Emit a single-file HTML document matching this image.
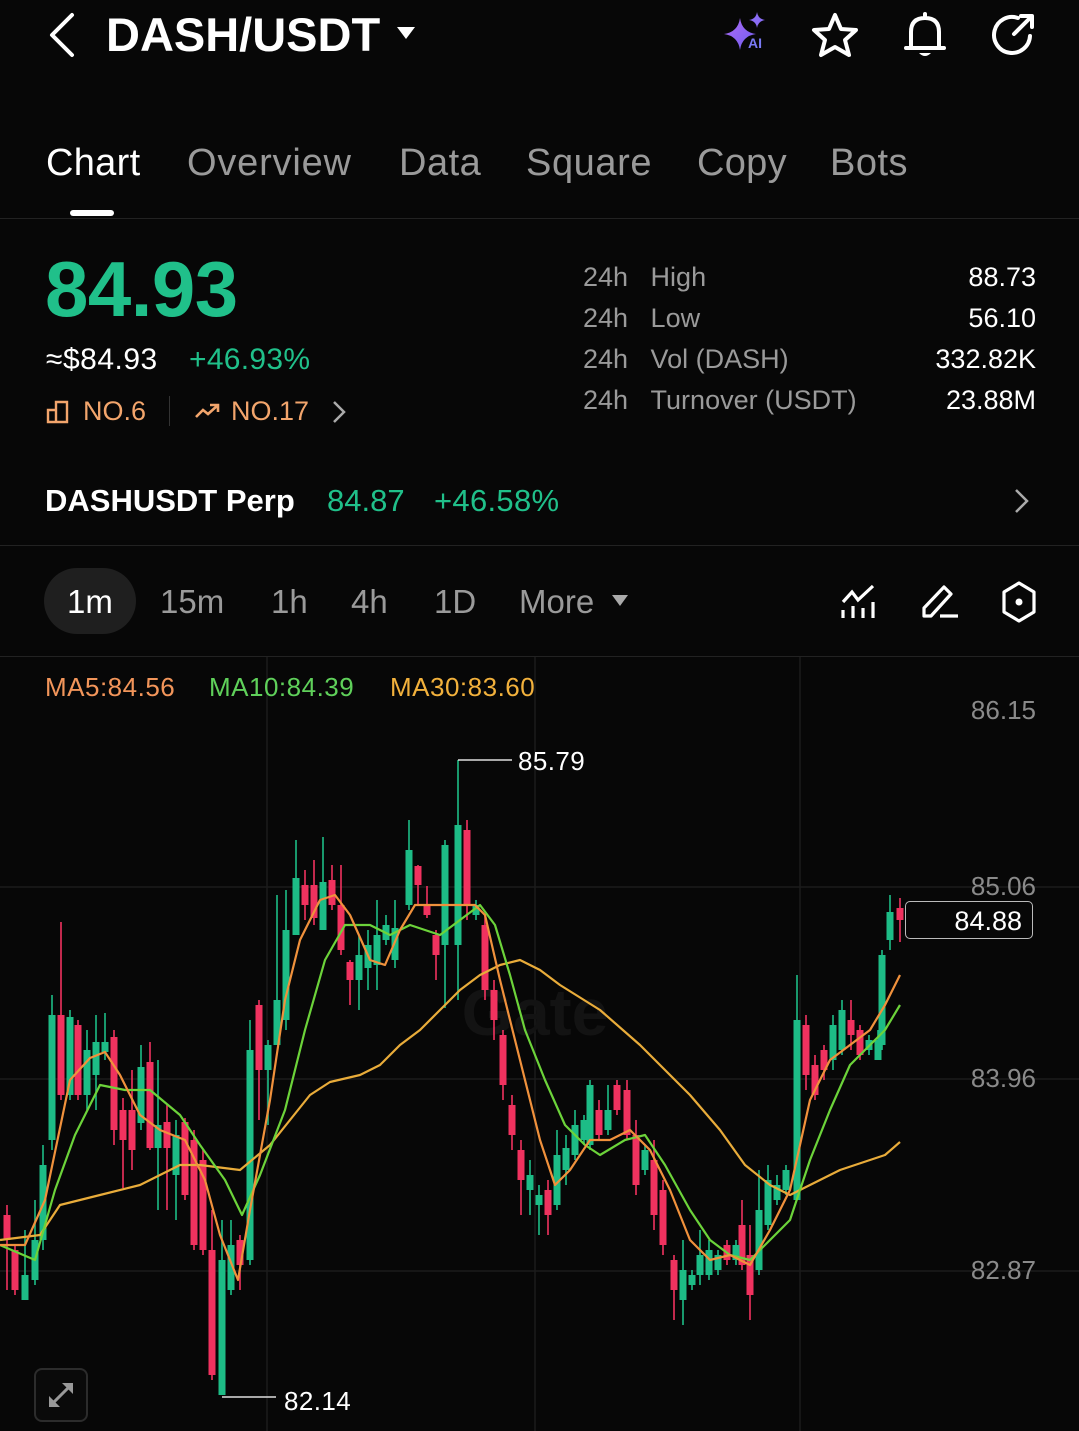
<!DOCTYPE html>
<html><head><meta charset="utf-8"><style>
*{margin:0;padding:0;box-sizing:border-box}
body{width:1079px;height:1431px;background:#070707;color:#fff;font-family:"Liberation Sans",sans-serif;position:relative;overflow:hidden}
.a{position:absolute;white-space:nowrap;line-height:1}
.g{color:#9a9a9a}
.gr{color:#20c08a}
.or{color:#f2a56c}
</style></head><body>
<svg class="a" style="left:44px;top:12px" width="34" height="46" viewBox="0 0 34 46"><path d="M28 3 L8 23 L28 43" fill="none" stroke="#fff" stroke-width="4" stroke-linecap="round" stroke-linejoin="round"/></svg>
<div class="a" style="left:106px;top:11px;font-size:47px;font-weight:700">DASH/USDT</div>
<svg class="a" style="left:396px;top:26px" width="20" height="14"><path d="M1 1 L19 1 L10 13Z" fill="#fff"/></svg>
<svg class="a" style="left:722px;top:10px" width="48" height="44" viewBox="0 0 48 44"><defs><linearGradient id="ag" x1="0" y1="0" x2="1" y2="1"><stop offset="0" stop-color="#b06cf5"/><stop offset="1" stop-color="#6d5cf0"/></linearGradient></defs><path d="M18 8 Q20 22 34 24 Q20 26 18 40 Q16 26 2 24 Q16 22 18 8Z" fill="url(#ag)"/><path d="M35 2 Q36 9 43 10 Q36 11 35 18 Q34 11 27 10 Q34 9 35 2Z" fill="#8a6cf5"/><text x="26" y="38" font-size="14" font-weight="700" fill="#7a7af5" style="font-family:'Liberation Sans',sans-serif">AI</text></svg>
<svg class="a" style="left:810px;top:12px" width="50" height="48" viewBox="0 0 50 48"><path d="M25 3 L31 17 L46 18 L35 28 L39 43 L25 35 L11 43 L15 28 L4 18 L19 17Z" fill="none" stroke="#fff" stroke-width="4" stroke-linejoin="round"/></svg>
<svg class="a" style="left:902px;top:10px" width="46" height="50" viewBox="0 0 46 50"><path d="M23 4 L23 7 M9 38 L9 22 Q9 8 23 8 Q37 8 37 22 L37 38 M4 38 L42 38" fill="none" stroke="#fff" stroke-width="4" stroke-linecap="round"/><path d="M17 43 Q23 49 29 43Z" fill="#fff"/></svg>
<svg class="a" style="left:990px;top:12px" width="46" height="46" viewBox="0 0 46 46"><path d="M28 6 A18 18 0 1 0 40 24" fill="none" stroke="#fff" stroke-width="4" stroke-linecap="round"/><path d="M24 22 L41 5 M31 4 L42 4 L42 15" fill="none" stroke="#fff" stroke-width="4" stroke-linecap="round" stroke-linejoin="round"/></svg>

<div class="a" style="left:46px;top:144px;font-size:38px;letter-spacing:0.3px">Chart</div>
<div class="a g" style="left:187px;top:144px;font-size:38px;letter-spacing:0.8px">Overview</div>
<div class="a g" style="left:399px;top:144px;font-size:38px;letter-spacing:0.5px">Data</div>
<div class="a g" style="left:526px;top:144px;font-size:38px;letter-spacing:0.6px">Square</div>
<div class="a g" style="left:697px;top:144px;font-size:38px;letter-spacing:0.3px">Copy</div>
<div class="a g" style="left:830px;top:144px;font-size:38px;letter-spacing:0.5px">Bots</div>
<div class="a" style="left:70px;top:210px;width:44px;height:6px;border-radius:3px;background:#fff"></div>
<div class="a" style="left:0;top:218px;width:1079px;height:1px;background:#222"></div>

<div class="a gr" style="left:45px;top:250px;font-size:78px;font-weight:700;letter-spacing:-0.5px">84.93</div>
<div class="a" style="left:46px;top:345px;font-size:30px;letter-spacing:0.5px">≈$84.93</div>
<div class="a gr" style="left:189px;top:345px;font-size:30px;letter-spacing:0.3px">+46.93%</div>
<svg class="a" style="left:46px;top:400px" width="24" height="24" viewBox="0 0 24 24"><path d="M2 22 L2 10 L10 10 L10 22 Z M10 22 L10 2 L21 2 L21 22 L2 22" fill="none" stroke="#f2a56c" stroke-width="2.4"/></svg>
<div class="a or" style="left:83px;top:398px;font-size:27px">NO.6</div>
<div class="a" style="left:169px;top:396px;width:1px;height:30px;background:#333"></div>
<svg class="a" style="left:194px;top:402px" width="26" height="18" viewBox="0 0 26 18"><path d="M2 15 L9 8 L14 12 L23 4 M16 3 L24 3 L24 10" fill="none" stroke="#f2a56c" stroke-width="2.6"/></svg>
<div class="a or" style="left:231px;top:398px;font-size:27px">NO.17</div>
<svg class="a" style="left:331px;top:400px" width="16" height="24"><path d="M3 2 L13 12 L3 22" fill="none" stroke="#aaa" stroke-width="2.5"/></svg>

<div class="a g" style="left:583px;top:264px;font-size:27px">24h&nbsp;&nbsp;&nbsp;High</div>
<div class="a g" style="left:583px;top:305px;font-size:27px">24h&nbsp;&nbsp;&nbsp;Low</div>
<div class="a g" style="left:583px;top:346px;font-size:27px">24h&nbsp;&nbsp;&nbsp;Vol (DASH)</div>
<div class="a g" style="left:583px;top:387px;font-size:27px">24h&nbsp;&nbsp;&nbsp;Turnover (USDT)</div>
<div class="a" style="right:43px;top:264px;font-size:27px">88.73</div>
<div class="a" style="right:43px;top:305px;font-size:27px">56.10</div>
<div class="a" style="right:43px;top:346px;font-size:27px">332.82K</div>
<div class="a" style="right:43px;top:387px;font-size:27px">23.88M</div>

<div class="a" style="left:45px;top:485px;font-size:31px;font-weight:700">DASHUSDT Perp</div>
<div class="a gr" style="left:327px;top:485px;font-size:31px">84.87</div>
<div class="a gr" style="left:434px;top:485px;font-size:31px;letter-spacing:0.3px">+46.58%</div>
<svg class="a" style="left:1013px;top:488px" width="18" height="26"><path d="M3 2 L14 13 L3 24" fill="none" stroke="#aaa" stroke-width="2.5"/></svg>
<div class="a" style="left:0;top:545px;width:1079px;height:1px;background:#222"></div>

<div class="a" style="left:44px;top:568px;width:92px;height:66px;border-radius:33px;background:#1f1f1f"></div>
<div class="a" style="left:67px;top:585px;font-size:33px">1m</div>
<div class="a g" style="left:160px;top:585px;font-size:33px">15m</div>
<div class="a g" style="left:271px;top:585px;font-size:33px">1h</div>
<div class="a g" style="left:351px;top:585px;font-size:33px">4h</div>
<div class="a g" style="left:434px;top:585px;font-size:33px">1D</div>
<div class="a g" style="left:519px;top:585px;font-size:33px">More</div>
<svg class="a" style="left:611px;top:594px" width="18" height="13"><path d="M1 1 L17 1 L9 12Z" fill="#aaa"/></svg>
<svg class="a" style="left:840px;top:584px" width="38" height="36" viewBox="0 0 38 36"><path d="M3 18 L12 8 L18 16 L33 2 M3 26 L3 34 M13 22 L13 34 M23 24 L23 34 M33 18 L33 34" fill="none" stroke="#fff" stroke-width="3.2"/></svg>
<svg class="a" style="left:920px;top:582px" width="40" height="38" viewBox="0 0 40 38"><path d="M4 34 L4 26 L24 5 L31 12 L11 34 Z M20 34 L38 34" fill="none" stroke="#fff" stroke-width="3.2" stroke-linejoin="round"/></svg>
<svg class="a" style="left:1000px;top:580px" width="38" height="44" viewBox="0 0 38 44"><path d="M19 3 L34 12 L34 32 L19 41 L4 32 L4 12 Z" fill="none" stroke="#fff" stroke-width="3.2" stroke-linejoin="round"/><circle cx="19" cy="22" r="3.5" fill="#fff"/></svg>
<div class="a" style="left:0;top:656px;width:1079px;height:1px;background:#222"></div>

<svg class="a" style="left:0;top:0" width="1079" height="1431">
<g stroke="#1c1c1c" stroke-width="1.5">
<line x1="0" y1="887" x2="1079" y2="887"/><line x1="0" y1="1079" x2="1079" y2="1079"/><line x1="0" y1="1271" x2="1079" y2="1271"/>
<line x1="267" y1="657" x2="267" y2="1431"/><line x1="535" y1="657" x2="535" y2="1431"/><line x1="800" y1="657" x2="800" y2="1431"/>
</g>
<text x="535" y="1035" font-size="66" font-weight="700" fill="#131313" style="font-family:'Liberation Sans',sans-serif" text-anchor="middle">Gate</text>
</svg>
<svg class="a" style="left:0;top:0" width="1079" height="1431">
<g>
<g stroke-width="1.6">
<path stroke="#f0325f" d="M7 1205V1290M15 1245V1295M61 922V1100M78 1020V1100M114 1030V1145M123 1098V1188M132 1070V1170M150 1042V1150M167 1105V1210M185 1118V1200M194 1130V1250M203 1150V1255M212 1210V1380M240 1235V1290M259 1000V1120M305 870V920M314 860V925M332 865V910M341 865V955M350 960V1005M418 865V905M427 886V918M436 930V980M467 820V920M485 915V1000M494 980V1040M503 1030V1100M512 1095V1150M521 1140V1215M548 1180V1235M599 1100V1140M617 1080V1115M627 1080V1140M636 1120V1195M654 1140V1230M663 1180V1255M674 1255V1320M727 1240V1265M742 1200V1270M750 1225V1320M806 1015V1090M815 1055V1100M824 1045V1080M851 1000V1050M860 1025V1060M900 898V942"/>
<path stroke="#1dbc86" d="M25 1230V1300M35 1200V1285M43 1145V1250M52 995V1150M70 1010V1100M87 1030V1110M96 1015V1110M105 1013V1060M141 1045V1130M158 1060V1210M176 1120V1220M222 1220V1395M231 1220V1295M250 1020V1265M268 1040V1125M277 895V1045M286 890V1030M296 840V935M323 837V930M359 935V1010M368 930V990M377 900V990M386 915V945M395 900V968M409 820V910M445 840V1008M458 760V1000M476 900V920M530 1160V1215M539 1185V1235M557 1130V1210M566 1135V1185M575 1110V1160M584 1115V1145M590 1080V1150M608 1085V1135M645 1145V1175M683 1240V1325M692 1270V1290M700 1230V1285M709 1240V1280M718 1250V1275M736 1240V1265M759 1170V1275M768 1165V1230M777 1175V1205M786 1165V1195M797 975V1200M833 1015V1070M842 1000V1055M869 1035V1055M878 1030V1060M882 950V1050M890 895V950"/>
</g>
<g fill="#f0325f">
<rect x="3.5" y="1215" width="7" height="25"/><rect x="11.5" y="1250" width="7" height="40"/><rect x="57.5" y="1015" width="7" height="80"/><rect x="74.5" y="1025" width="7" height="70"/><rect x="110.5" y="1037" width="7" height="93"/><rect x="119.5" y="1110" width="7" height="30"/><rect x="128.5" y="1110" width="7" height="40"/><rect x="146.5" y="1062" width="7" height="86"/><rect x="163.5" y="1122" width="7" height="26"/><rect x="181.5" y="1122" width="7" height="73"/><rect x="190.5" y="1140" width="7" height="105"/><rect x="199.5" y="1160" width="7" height="90"/><rect x="208.5" y="1250" width="7" height="125"/><rect x="236.5" y="1240" width="7" height="25"/><rect x="255.5" y="1005" width="7" height="65"/><rect x="301.5" y="885" width="7" height="20"/><rect x="310.5" y="885" width="7" height="33"/><rect x="328.5" y="880" width="7" height="25"/><rect x="337.5" y="905" width="7" height="45"/><rect x="346.5" y="962" width="7" height="18"/><rect x="414.5" y="866" width="7" height="19"/><rect x="423.5" y="905" width="7" height="10"/><rect x="432.5" y="935" width="7" height="20"/><rect x="463.5" y="830" width="7" height="75"/><rect x="481.5" y="925" width="7" height="65"/><rect x="490.5" y="990" width="7" height="30"/><rect x="499.5" y="1035" width="7" height="50"/><rect x="508.5" y="1105" width="7" height="30"/><rect x="517.5" y="1150" width="7" height="30"/><rect x="544.5" y="1190" width="7" height="25"/><rect x="595.5" y="1110" width="7" height="25"/><rect x="613.5" y="1085" width="7" height="25"/><rect x="623.5" y="1090" width="7" height="45"/><rect x="632.5" y="1135" width="7" height="50"/><rect x="650.5" y="1160" width="7" height="55"/><rect x="659.5" y="1190" width="7" height="55"/><rect x="670.5" y="1260" width="7" height="30"/><rect x="723.5" y="1245" width="7" height="15"/><rect x="738.5" y="1225" width="7" height="40"/><rect x="746.5" y="1255" width="7" height="40"/><rect x="802.5" y="1025" width="7" height="50"/><rect x="811.5" y="1065" width="7" height="30"/><rect x="820.5" y="1050" width="7" height="20"/><rect x="847.5" y="1020" width="7" height="15"/><rect x="856.5" y="1030" width="7" height="25"/><rect x="896.5" y="908" width="7" height="12"/>
</g>
<g fill="#1dbc86">
<rect x="21.5" y="1275" width="7" height="25"/><rect x="31.5" y="1240" width="7" height="40"/><rect x="39.5" y="1165" width="7" height="75"/><rect x="48.5" y="1015" width="7" height="125"/><rect x="66.5" y="1017" width="7" height="78"/><rect x="83.5" y="1050" width="7" height="45"/><rect x="92.5" y="1042" width="7" height="33"/><rect x="101.5" y="1042" width="7" height="10"/><rect x="137.5" y="1067" width="7" height="56"/><rect x="154.5" y="1125" width="7" height="23"/><rect x="172.5" y="1135" width="7" height="40"/><rect x="218.5" y="1260" width="7" height="135"/><rect x="227.5" y="1245" width="7" height="45"/><rect x="246.5" y="1050" width="7" height="210"/><rect x="264.5" y="1045" width="7" height="25"/><rect x="273.5" y="1000" width="7" height="45"/><rect x="282.5" y="930" width="7" height="90"/><rect x="292.5" y="878" width="7" height="57"/><rect x="319.5" y="882" width="7" height="48"/><rect x="355.5" y="955" width="7" height="25"/><rect x="364.5" y="945" width="7" height="23"/><rect x="373.5" y="935" width="7" height="30"/><rect x="382.5" y="925" width="7" height="15"/><rect x="391.5" y="928" width="7" height="32"/><rect x="405.5" y="850" width="7" height="55"/><rect x="441.5" y="845" width="7" height="100"/><rect x="454.5" y="825" width="7" height="120"/><rect x="472.5" y="905" width="7" height="10"/><rect x="526.5" y="1175" width="7" height="15"/><rect x="535.5" y="1195" width="7" height="10"/><rect x="553.5" y="1155" width="7" height="50"/><rect x="562.5" y="1148" width="7" height="22"/><rect x="571.5" y="1125" width="7" height="30"/><rect x="580.5" y="1120" width="7" height="20"/><rect x="586.5" y="1085" width="7" height="60"/><rect x="604.5" y="1110" width="7" height="20"/><rect x="641.5" y="1150" width="7" height="20"/><rect x="679.5" y="1270" width="7" height="30"/><rect x="688.5" y="1275" width="7" height="10"/><rect x="696.5" y="1255" width="7" height="20"/><rect x="705.5" y="1250" width="7" height="25"/><rect x="714.5" y="1255" width="7" height="15"/><rect x="732.5" y="1245" width="7" height="15"/><rect x="755.5" y="1210" width="7" height="60"/><rect x="764.5" y="1180" width="7" height="45"/><rect x="773.5" y="1185" width="7" height="15"/><rect x="782.5" y="1170" width="7" height="20"/><rect x="793.5" y="1020" width="7" height="180"/><rect x="829.5" y="1025" width="7" height="35"/><rect x="838.5" y="1010" width="7" height="40"/><rect x="865.5" y="1040" width="7" height="10"/><rect x="874.5" y="1040" width="7" height="20"/><rect x="878.5" y="955" width="7" height="90"/><rect x="886.5" y="912" width="7" height="28"/>
</g>
<g fill="none" stroke-width="2.2" stroke-linejoin="round">
<polyline stroke="#e9ac3a" points="0,1240 40,1235 60,1205 100,1195 140,1185 180,1165 200,1165 240,1170 270,1145 290,1120 310,1095 330,1082 360,1075 380,1065 400,1045 420,1030 440,1010 460,990 480,975 500,965 520,960 540,970 560,985 600,1010 640,1045 660,1065 690,1095 720,1130 745,1165 770,1185 790,1195 810,1185 840,1170 870,1160 885,1155 900,1142"/>
<polyline stroke="#6cd33a" points="0,1245 35,1260 55,1190 75,1135 100,1085 125,1090 150,1090 180,1115 200,1145 225,1180 242,1215 260,1175 285,1110 305,1030 325,960 345,925 370,925 390,935 410,925 440,935 460,920 480,905 495,925 510,975 525,1030 545,1080 565,1125 585,1145 600,1155 625,1140 645,1135 665,1165 690,1210 710,1240 730,1255 750,1260 770,1240 790,1220 810,1160 830,1110 850,1065 870,1045 885,1030 900,1005"/>
<polyline stroke="#f0913c" points="0,1245 25,1245 45,1200 70,1080 90,1058 105,1052 120,1075 140,1115 160,1130 185,1140 205,1180 220,1235 238,1280 250,1210 270,1100 285,1000 300,940 320,900 335,895 350,915 370,960 385,965 400,930 415,905 440,905 460,905 475,905 485,915 500,980 520,1060 540,1140 555,1185 570,1170 590,1140 610,1140 630,1130 650,1150 670,1190 690,1240 710,1260 730,1255 750,1265 770,1230 790,1190 810,1100 830,1060 850,1045 870,1030 885,1005 900,975"/>
</g>
<path d="M458 760 H512 M222 1397 H276" stroke="#ddd" stroke-width="1.5" fill="none"/>
</g>
</svg>
<div class="a" style="left:518px;top:748px;font-size:26px;letter-spacing:0.4px">85.79</div>
<div class="a" style="left:284px;top:1388px;font-size:26px;letter-spacing:0.4px">82.14</div>
<div class="a" style="left:45px;top:674px;font-size:26px;letter-spacing:0.5px;color:#f2955a">MA5:84.56</div>
<div class="a" style="left:209px;top:674px;font-size:26px;letter-spacing:0.5px;color:#5fd05a">MA10:84.39</div>
<div class="a" style="left:390px;top:674px;font-size:26px;letter-spacing:0.5px;color:#f2b13c">MA30:83.60</div>
<div class="a" style="right:43px;top:697px;font-size:26px;color:#8a8a8a">86.15</div>
<div class="a" style="right:43px;top:873px;font-size:26px;color:#8a8a8a">85.06</div>
<div class="a" style="right:43px;top:1065px;font-size:26px;color:#8a8a8a">83.96</div>
<div class="a" style="right:43px;top:1257px;font-size:26px;color:#8a8a8a">82.87</div>
<div class="a" style="left:905px;top:901px;width:128px;height:38px;border:1.5px solid #bbb;border-radius:5px;background:#070707"></div>
<div class="a" style="right:57px;top:908px;font-size:27px">84.88</div>
<div class="a" style="left:34px;top:1368px;width:54px;height:54px;border:2px solid #2c2c2c;border-radius:8px;background:#0a0a0a"></div>
<svg class="a" style="left:46px;top:1380px" width="30" height="30" viewBox="0 0 30 30"><path d="M4 26 L26 4" stroke="#999" stroke-width="3"/><path d="M3 27 L3 16 L14 27Z M27 3 L16 3 L27 14Z" fill="#999"/></svg>
</body></html>
